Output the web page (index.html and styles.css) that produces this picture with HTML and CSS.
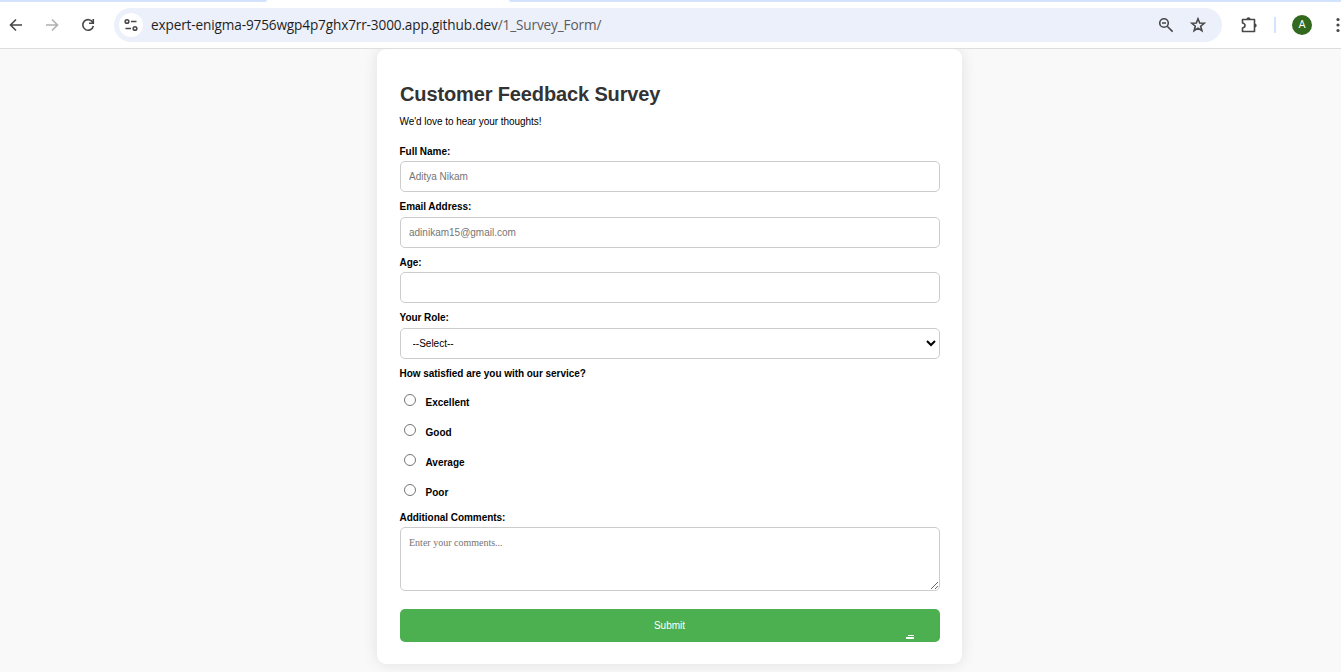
FILE: index.html
```html
<!DOCTYPE html>
<html lang="en">
<head>
<meta charset="utf-8">
<title>Customer Feedback Survey</title>
<link rel="stylesheet" href="styles.css">
</head>
<body>
<header class="browser">
  <div class="tabstrip"><span class="active-tab"></span></div>
  <div class="toolbar">
    <svg class="icon back" width="16" height="16" viewBox="0 0 16 16"><path d="M14 8H3M8 2.500 2.500 8 8 13.500"/></svg>
    <svg class="icon forward" width="16" height="16" viewBox="0 0 16 16"><path d="M2 8H13M8 2.500 13.500 8 8 13.500"/></svg>
    <svg class="icon reload" width="16" height="16" viewBox="0 0 16 16"><path d="M12.800 5.500A5.300 5.300 0 1 0 13.300 9M13.300 2V6.200H9"/></svg>
    <div class="omnibox">
      <span class="site-info"><svg class="icon" width="14" height="14" viewBox="0 0 14 14"><circle cx="3" cy="3.500" r="1.800"/><path d="M7 3.500H12.500M1.500 10.500H7"/><circle cx="11" cy="10.500" r="1.800"/></svg></span>
      <span class="url">expert-enigma-9756wgp4p7ghx7rr-3000.app.github.dev<span class="path">/1_Survey_Form/</span></span>
      <svg class="icon magnifier" width="16" height="16" viewBox="0 0 16 16"><circle cx="6" cy="6" r="4.300"/><path d="M9.200 9.200 14.600 14.600M4 6H8"/></svg>
      <svg class="icon star" width="16" height="16" viewBox="0 0 16 16"><path d="M8 1.800 9.700 6 14.200 6.300 10.700 9.200 11.900 13.700 8 11.200 4.100 13.700 5.300 9.200 1.800 6.300 6.300 6Z"/></svg>
    </div>
    <svg class="icon puzzle" width="18" height="18" viewBox="0 0 18 18"><path d="M2.500 3.500H14.500V15.500H2.500V12Q5 11.500 5 9.500T2.500 7Z" stroke-linejoin="round"/><path class="solid" d="M6.400 3.500a2.100 2.300 0 0 1 4.200 0ZM14.500 7.400a2.200 2.100 0 0 1 0 4.200Z"/></svg>
    <span class="divider"></span>
    <span class="avatar">A</span>
    <svg class="kebab" width="6" height="16" viewBox="0 0 6 16"><circle cx="3" cy="2.500" r="1.600"/><circle cx="3" cy="8" r="1.600"/><circle cx="3" cy="13.500" r="1.600"/></svg>
  </div>
</header>
<main class="page">
  <form class="card">
    <h1 class="title">Customer Feedback Survey</h1>
    <p class="intro">We'd love to hear your thoughts!</p>
    <div class="field"><label class="label" for="name">Full Name:</label><input class="control" id="name" type="text" placeholder="Aditya Nikam"></div>
    <div class="field"><label class="label" for="email">Email Address:</label><input class="control" id="email" type="email" placeholder="adinikam15@gmail.com"></div>
    <div class="field"><label class="label" for="age">Age:</label><input class="control" id="age" type="number"></div>
    <div class="field"><label class="label" for="role">Your Role:</label><select class="control select" id="role"><option>--Select--</option></select></div>
    <div class="label">How satisfied are you with our service?</div>
    <div class="options">
      <label class="option"><input class="radio" type="radio" name="rating">Excellent</label>
      <label class="option"><input class="radio" type="radio" name="rating">Good</label>
      <label class="option"><input class="radio" type="radio" name="rating">Average</label>
      <label class="option"><input class="radio" type="radio" name="rating">Poor</label>
    </div>
    <label class="label" for="comments">Additional Comments:</label>
    <textarea class="control comments" id="comments" placeholder="Enter your comments..."></textarea>
    <button class="submit" type="button">Submit<span class="mark"></span></button>
  </form>
</main>
</body>
</html>
```
FILE: styles.css
```css
* { box-sizing: border-box; }
body { margin: 0; height: 672px; overflow: hidden; background: #f9f9f9; font-family: "Liberation Sans", Arial, sans-serif; font-size: 10px; color: #000; }
.browser { position: relative; height: 49px; background: #fff; border-bottom: 1px solid #dedede; }
.tabstrip { height: 2px; background: #d3e3fd; padding-left: 266px; }
.active-tab { display: block; width: 244px; height: 2px; background: #fff; border-radius: 3px 3px 0 0; }
.toolbar { display: flex; align-items: center; height: 46px; padding-left: 8px; }
.icon { flex: none; fill: none; stroke: #474747; stroke-width: 1.6; }
.forward { margin-left: 20px; stroke: #b0b0b0; }
.reload { margin-left: 20px; }
.omnibox { flex: none; display: flex; align-items: center; width: 1108px; height: 34px; margin-left: 18px; padding: 0 16px 0 5px; border-radius: 17px; background: #ecf0fa; }
.site-info { display: flex; align-items: center; justify-content: center; width: 24px; height: 24px; border-radius: 50%; background: #fff; }
.url { flex: 1; margin-left: 8px; font: 13.6px/20px "Open Sans", "Noto Sans", sans-serif; letter-spacing: -0.135px; white-space: nowrap; color: #1f1f1f; }
.path { color: #5c5c5c; }
.star { margin-left: 16px; }
.puzzle { margin-left: 18px; }
.solid { fill: #474747; stroke: none; }
.divider { width: 2px; height: 16px; margin-left: 16px; background: #d3e3fd; }
.avatar { flex: none; width: 20px; height: 20px; margin-left: 16px; border-radius: 50%; background: #33691e; color: #fff; font: 11px/20px Roboto, sans-serif; text-align: center; }
.kebab { flex: none; margin-left: 22.5px; fill: #474747; }
.page { display: flex; justify-content: center; padding-right: 2px; }
.card { display: flex; flex-direction: column; width: 585px; height: 615px; padding: 33px 22px 0 23px; border-radius: 9px; background: #fff; box-shadow: 0 0 15px rgba(0, 0, 0, .1); }
.title { margin: 0; height: 24px; font-size: 20px; line-height: 24px; letter-spacing: -0.13px; color: #333; white-space: nowrap; }
.intro { margin: 10px 0 18px; height: 12px; line-height: 12px; letter-spacing: -0.05px; text-indent: -0.5px; }
.label { display: block; height: 12px; line-height: 12px; font-weight: bold; letter-spacing: -0.04px; text-indent: -0.5px; }
.field { display: flex; flex-direction: column; gap: 3.4px; margin-bottom: 9.1px; }
.control { width: 540px; height: 31px; padding: 0 8px; border: 1px solid #ccc; border-radius: 5px; background: #fff; font: 10px "Liberation Sans", Arial, sans-serif; color: #000; outline: 0; }
.control::placeholder { color: #757575; }
.select { padding: 0 0 0 7.5px; }
.options { padding: 7.5px 0 4.5px; }
.option { display: flex; align-items: center; height: 30px; font-weight: bold; }
.radio { width: 12px; height: 12px; margin: 0 10px 4px 3.5px; }
.comments { height: 64px; margin-top: 3px; padding: 9px 8px; font-family: "Liberation Serif", "Times New Roman", serif; }
.submit { position: relative; width: 540px; height: 33px; margin-top: 18px; padding: 0 1px 0 0; border: 0; border-radius: 5px; background: #4caf50; color: #fff; font: 10px "Liberation Sans", Arial, sans-serif; }
.mark { position: absolute; right: 26px; bottom: 3px; width: 8px; height: 4px; background: linear-gradient(#fff, #fff) 2px 0 / 6px 1px no-repeat, linear-gradient(#fff, #fff) 0 2px / 8px 2px no-repeat; }
```
